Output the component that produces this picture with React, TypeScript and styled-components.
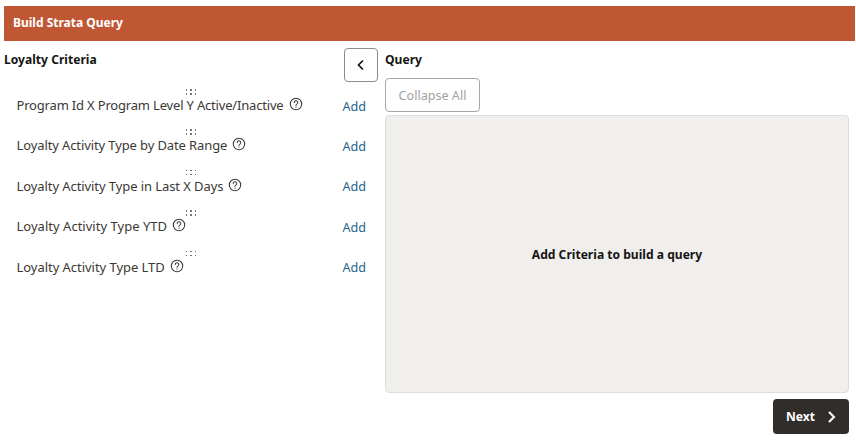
import React from "react";
import styled, { createGlobalStyle } from "styled-components";

const GlobalStyle = createGlobalStyle`
  html, body {
    margin: 0;
    padding: 0;
    background: #fff;
    font-family: "Noto Sans", "Open Sans", sans-serif;
    color: #161513;
  }
`;

const Page = styled.div`
  width: 856px;
  height: 447px;
  box-sizing: border-box;
  padding: 6px 1px 0 4px;
  overflow: hidden;
`;

const TitleBar = styled.header`
  height: 35px;
  background: #bf5735;
  color: #fff;
  font-size: 12px;
  font-weight: 700;
  line-height: 33px;
  padding-left: 9px;
`;

const Columns = styled.div`
  display: flex;
`;

const LeftColumn = styled.section`
  width: 340px;
  padding-top: 9px;
`;

const SectionTitle = styled.h2`
  margin: 0;
  font-size: 12.1px;
  font-weight: 700;
  line-height: 20px;
`;

const CriteriaList = styled.div`
  display: flex;
  flex-direction: column;
  gap: 3.45px;
  margin-top: 19px;
`;

const CriteriaItem = styled.div`
  height: 37px;
`;

const DragHandle = styled.div`
  display: grid;
  grid-template-columns: repeat(3, 2px);
  gap: 2px 2.5px;
  justify-content: center;
  height: 6px;
  position: relative;
  left: 17px;
  span {
    width: 1.5px;
    height: 1.5px;
    background: #77736e;
  }
`;

const CriteriaRow = styled.div`
  display: flex;
  align-items: center;
  justify-content: space-between;
  margin-top: -4px;
  padding-left: 12.5px;
  height: 26px;
`;

const CriteriaLabel = styled.div<{ $tracking: number }>`
  display: flex;
  align-items: center;
  gap: 5px;
  font-size: 13px;
  color: #3b3936;
  span {
    position: relative;
    top: 1px;
    letter-spacing: ${(p) => p.$tracking}px;
  }
`;

const AddLink = styled.a`
  font-size: 12.6px;
  color: #22668d;
  position: relative;
  top: 2px;
  margin-right: -22px;
`;

const ToggleColumn = styled.div`
  width: 41px;
  padding-top: 7px;
`;

const ToggleButton = styled.button`
  display: flex;
  align-items: center;
  justify-content: center;
  width: 34px;
  height: 34px;
  padding: 0;
  background: #fff;
  border: 1px solid #8f8c88;
  border-radius: 4px;
`;

const QueryColumn = styled.section`
  flex: 1;
  padding-top: 9px;
  padding-right: 6px;
`;

const CollapseButton = styled.button`
  display: block;
  width: 95px;
  height: 34px;
  margin-top: 8px;
  background: #fff;
  border: 1px solid #a9a7a4;
  border-radius: 4px;
  color: #a3a19e;
  font-family: inherit;
  font-size: 12.6px;
`;

const EmptyPanel = styled.div`
  display: flex;
  align-items: center;
  justify-content: center;
  height: 278px;
  margin-top: 3px;
  box-sizing: border-box;
  background: #f0efed;
  border: 1px solid #dfdedc;
  border-radius: 4px;
  font-size: 12.1px;
  font-weight: 700;
`;

const Footer = styled.div`
  display: flex;
  justify-content: flex-end;
  margin-top: 6px;
`;

const NextButton = styled.button`
  display: flex;
  align-items: center;
  justify-content: space-between;
  box-sizing: border-box;
  width: 76px;
  height: 35px;
  padding: 0 12px 0 13px;
  background: #312d2a;
  border: none;
  border-radius: 4px;
  color: #fff;
  font-family: inherit;
  font-size: 12.1px;
  font-weight: 700;
`;

const HelpIcon = () => (
  <svg width="14" height="14" viewBox="0 0 14 14" fill="none" stroke="#3b3936" strokeWidth="1.05">
    <circle cx="7" cy="7" r="5.7" />
    <path d="M5.2 5.6a1.8 1.8 0 1 1 2.7 1.55c-.6.35-.9.6-.9 1.2" strokeLinecap="round" />
    <circle cx="7" cy="10.1" r=".65" fill="#3b3936" stroke="none" />
  </svg>
);

const Chevron = ({ dir, color, width = 1.6 }: { dir: "left" | "right"; color: string; width?: number }) => (
  <svg width="12" height="14" viewBox="0 0 12 14" fill="none" stroke={color} strokeWidth={width}>
    <path d={dir === "left" ? "M8 2.5 3.5 7 8 11.5" : "M4 2 9 7 4 12"} />
  </svg>
);

const criteria = [
  { label: "Program Id X Program Level Y Active/Inactive", tracking: -0.18 },
  { label: "Loyalty Activity Type by Date Range", tracking: -0.11 },
  { label: "Loyalty Activity Type in Last X Days", tracking: -0.08 },
  { label: "Loyalty Activity Type YTD", tracking: 0.02 },
  { label: "Loyalty Activity Type LTD", tracking: -0.04 },
];

export default function App() {
  return (
    <Page>
      <GlobalStyle />
      <TitleBar>Build Strata Query</TitleBar>
      <Columns>
        <LeftColumn>
          <SectionTitle>Loyalty Criteria</SectionTitle>
          <CriteriaList>
            {criteria.map(({ label, tracking }) => (
              <CriteriaItem key={label}>
                <DragHandle>
                  {Array.from({ length: 6 }, (_, i) => (
                    <span key={i} />
                  ))}
                </DragHandle>
                <CriteriaRow>
                  <CriteriaLabel $tracking={tracking}>
                    <span>{label}</span>
                    <HelpIcon />
                  </CriteriaLabel>
                  <AddLink>Add</AddLink>
                </CriteriaRow>
              </CriteriaItem>
            ))}
          </CriteriaList>
        </LeftColumn>
        <ToggleColumn>
          <ToggleButton aria-label="Collapse">
            <Chevron dir="left" color="#161513" width={1.7} />
          </ToggleButton>
        </ToggleColumn>
        <QueryColumn>
          <SectionTitle>Query</SectionTitle>
          <CollapseButton>Collapse All</CollapseButton>
          <EmptyPanel>Add Criteria to build a query</EmptyPanel>
          <Footer>
            <NextButton>
              Next
              <Chevron dir="right" color="#fff" width={2.1} />
            </NextButton>
          </Footer>
        </QueryColumn>
      </Columns>
    </Page>
  );
}
